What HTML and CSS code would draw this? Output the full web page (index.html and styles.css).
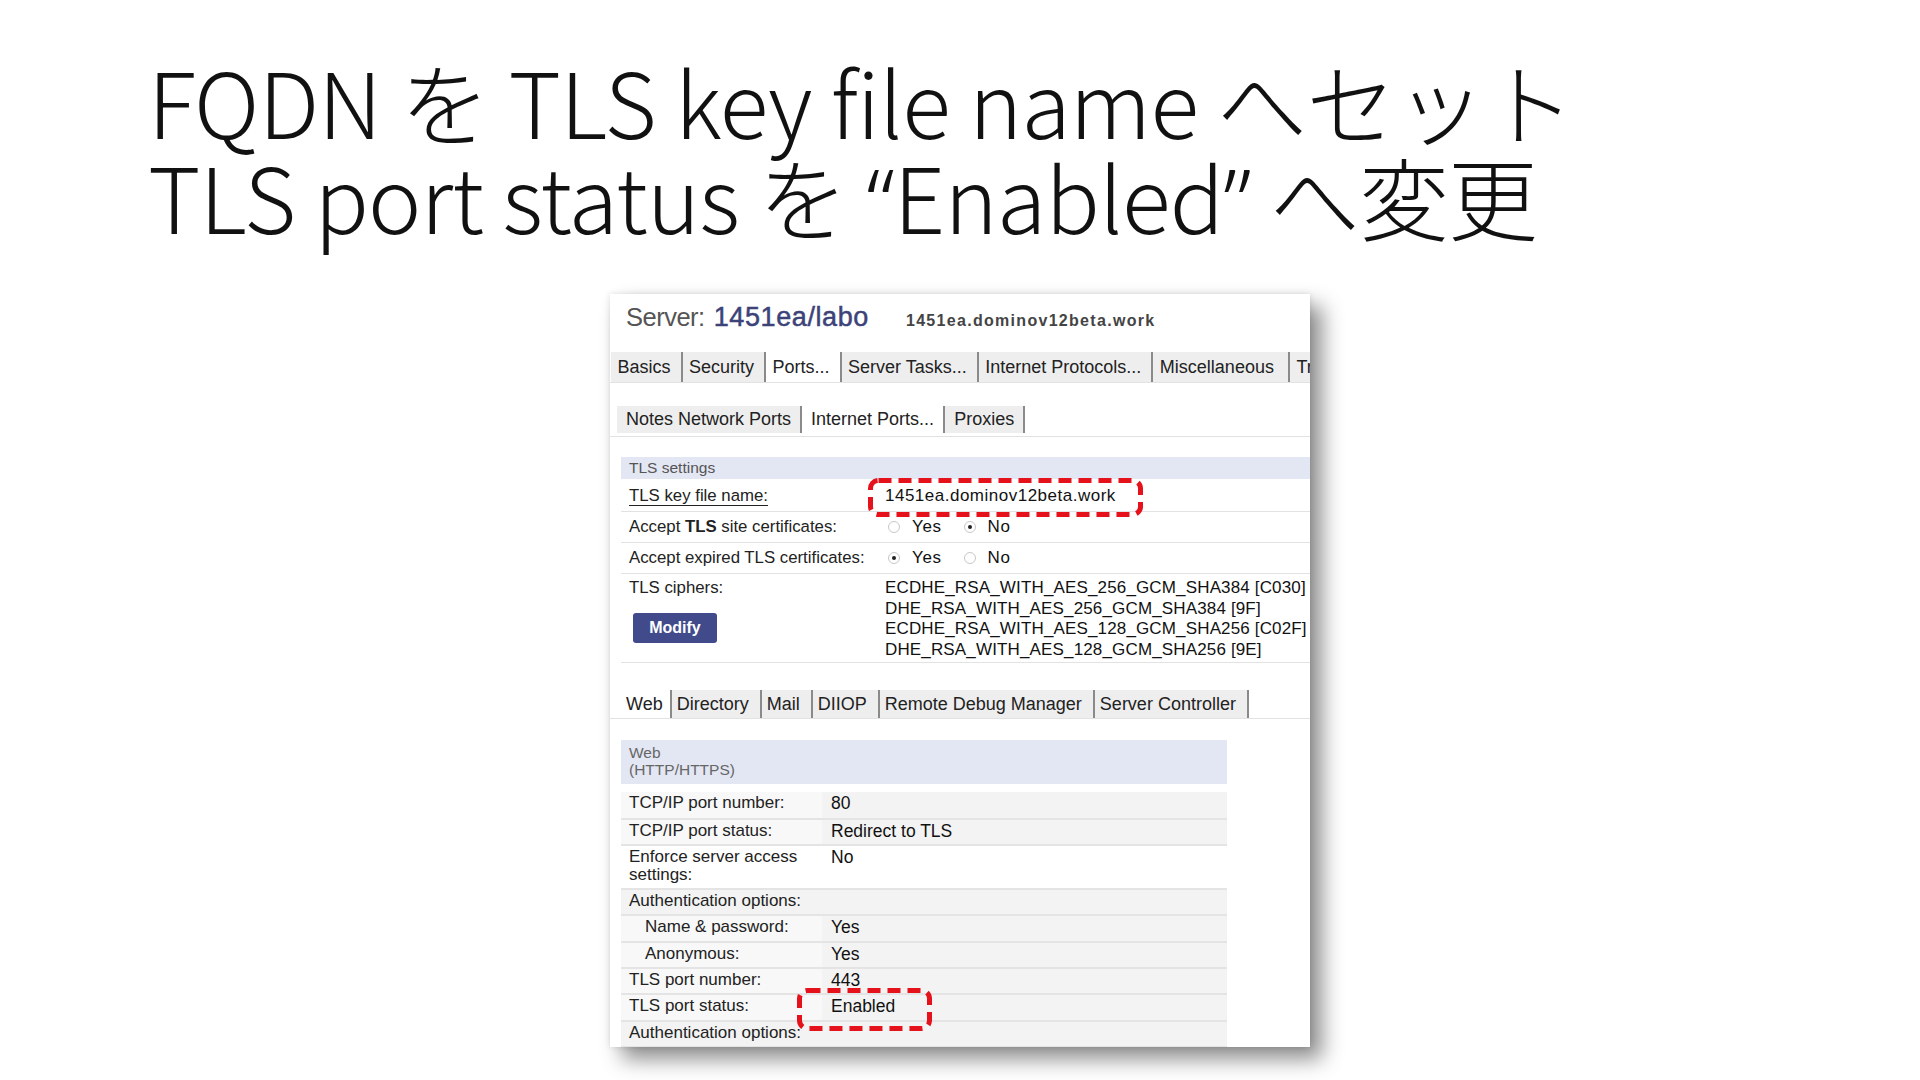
FILE: index.html
```html
<!DOCTYPE html>
<html lang="ja">
<head>
  <meta charset="UTF-8">
  <title>TLS settings</title>
  <link rel="stylesheet" href="styles.css">
</head>
<body>
  <div class="slide">
    <h1 class="title">FQDN を TLS key file name へセット<br>TLS port status を <span class="quote">“</span>Enabled<span class="quote">”</span> へ変更</h1>

    <div class="shot">
      <div class="server-head">
        <span class="server-label">Server:</span>
        <span class="server-name">1451ea/labo</span>
        <span class="server-host">1451ea.dominov12beta.work</span>
      </div>

      <div class="tabs tabs-main">
        <span class="tab">Basics</span>
        <span class="tab">Security</span>
        <span class="tab active">Ports...</span>
        <span class="tab">Server Tasks...</span>
        <span class="tab">Internet Protocols...</span>
        <span class="tab">Miscellaneous</span>
        <span class="tab">Transactional Logging</span>
      </div>

      <div class="tabs tabs-sub">
        <span class="tab">Notes Network Ports</span>
        <span class="tab active">Internet Ports...</span>
        <span class="tab">Proxies</span>
      </div>

      <div class="tls">
        <div class="sec-head">TLS settings</div>
        <div class="row row-key">
          <div class="lbl"><span class="link">TLS key file name:</span></div>
          <div class="val wide">1451ea.dominov12beta.work</div>
        </div>
        <div class="row row-radio">
          <div class="lbl">Accept <b>TLS</b> site certificates:</div>
          <div class="val radios">
            <span class="radio"></span><span class="opt">Yes</span>
            <span class="radio on"></span><span class="opt">No</span>
          </div>
        </div>
        <div class="row row-radio">
          <div class="lbl">Accept expired TLS certificates:</div>
          <div class="val radios">
            <span class="radio on"></span><span class="opt">Yes</span>
            <span class="radio"></span><span class="opt">No</span>
          </div>
        </div>
        <div class="row row-ciphers">
          <div class="lbl">
            TLS ciphers:
            <button class="modify">Modify</button>
          </div>
          <div class="val ciphers">
            <div>ECDHE_RSA_WITH_AES_256_GCM_SHA384 [C030]</div>
            <div>DHE_RSA_WITH_AES_256_GCM_SHA384 [9F]</div>
            <div>ECDHE_RSA_WITH_AES_128_GCM_SHA256 [C02F]</div>
            <div>DHE_RSA_WITH_AES_128_GCM_SHA256 [9E]</div>
          </div>
        </div>
      </div>

      <div class="tabs tabs-proto">
        <span class="tab active">Web</span>
        <span class="tab">Directory</span>
        <span class="tab">Mail</span>
        <span class="tab">DIIOP</span>
        <span class="tab">Remote Debug Manager</span>
        <span class="tab">Server Controller</span>
      </div>

      <div class="web">
        <div class="web-head">Web<br>(HTTP/HTTPS)</div>
        <div class="wrow first"><div class="wl">TCP/IP port number:</div><div class="wv">80</div></div>
        <div class="wrow"><div class="wl">TCP/IP port status:</div><div class="wv">Redirect to TLS</div></div>
        <div class="wrow tall"><div class="wl">Enforce server access settings:</div><div class="wv">No</div></div>
        <div class="wrow"><div class="wl span">Authentication options:</div></div>
        <div class="wrow"><div class="wl indent">Name &amp; password:</div><div class="wv">Yes</div></div>
        <div class="wrow"><div class="wl indent">Anonymous:</div><div class="wv">Yes</div></div>
        <div class="wrow"><div class="wl">TLS port number:</div><div class="wv">443</div></div>
        <div class="wrow"><div class="wl">TLS port status:</div><div class="wv">Enabled</div></div>
        <div class="wrow"><div class="wl span">Authentication options:</div></div>
      </div>

      <!-- red callouts drawn over the screenshot -->
      <svg class="mark mark-key" width="275" height="39" viewBox="0 0 275 39">
        <rect x="2.5" y="2.5" width="270" height="34" rx="8" ry="8"/>
      </svg>
      <svg class="mark mark-status" width="135" height="43" viewBox="0 0 135 43">
        <rect x="2.5" y="2.5" width="130" height="38" rx="8" ry="8"/>
      </svg>
    </div>
  </div>
</body>
</html>
```

FILE: styles.css
```css
body {
    margin: 0;
    background: #ffffff;
}

.slide {
    width: 1920px;
    height: 1080px;
    overflow: hidden;
    position: relative;
}

/* 見出し */
.title {
    margin: 53px 0 0 148px;
    height: 190px;
    font-family: "Noto Sans CJK JP", sans-serif;
    font-weight: 300;
    font-size: 90px;
    line-height: 95px;
    letter-spacing: -0.8px;
    color: #111111;
    white-space: nowrap;
}

.quote {
    font-family: "Noto Sans", "Open Sans", sans-serif;
    font-weight: 300;
    line-height: 0;
}

/* スクリーンショット部分 */
.shot {
    position: relative;
    margin: 51px 0 0 610px;
    width: 700px;
    height: 753px;
    overflow: hidden;
    background: #ffffff;
    box-shadow: 12px 12px 20px rgba(0, 0, 0, 0.45), 0 0 6px rgba(0, 0, 0, 0.12);
    font-family: "Liberation Sans", Arial, sans-serif;
    color: #222222;
}

.server-head {
    display: flex;
    align-items: baseline;
    height: 58px;
    padding: 8px 0 0 16px;
    box-sizing: border-box;
    line-height: 30px;
    white-space: nowrap;
}

.server-label {
    font-size: 25.5px;
    letter-spacing: -0.5px;
    color: #555555;
}

.server-name {
    margin-left: 9px;
    font-size: 27px;
    letter-spacing: 0.6px;
    -webkit-text-stroke: 0.5px #3d4279;
    color: #3d4279;
}

.server-host {
    margin-left: 37px;
    font-size: 16px;
    font-weight: bold;
    letter-spacing: 1.3px;
    color: #444444;
}

/* タブ */
.tabs {
    display: flex;
    white-space: nowrap;
    border-bottom: 1px solid #e2e2e2;
}

.tab {
    padding: 0 10px 0 6.5px;
    border-right: 2px solid #8a8a8a;
    background: #eeeeee;
    font-size: 18px;
    color: #222222;
}

.tab.active {
    background: #ffffff;
}

.tabs-main {
    height: 30px;
    line-height: 30px;
    padding-left: 1px;
}

.tabs-main .tab:nth-child(6) {
    padding-right: 14px;
}

.tabs-sub {
    margin-top: 23px;
    height: 27px;
    line-height: 27px;
    padding: 0 0 3px 7px;
}

.tabs-sub .tab {
    padding: 0 9px 0 9px;
}

.tabs-proto {
    margin-top: 27px;
    height: 28px;
    line-height: 28px;
    padding-left: 11px;
}

.tabs-proto .tab {
    padding: 0 11px 0 5px;
}

.tabs-proto .tab:first-child {
    padding-right: 7px;
}

/* TLS 設定 */
.tls {
    margin: 20px 0 0 11px;
}

.sec-head {
    height: 22px;
    line-height: 22px;
    padding-left: 8px;
    background: #e3e6f3;
    font-size: 15.5px;
    color: #555555;
}

.row {
    display: flex;
    border-bottom: 1px solid #e2e2e2;
    font-size: 16.8px;
}

.lbl {
    width: 264px;
    flex: none;
    padding-left: 8px;
    box-sizing: border-box;
}

.val {
    font-size: 17px;
    color: #111111;
}

.row-key {
    height: 33px;
    padding-top: 2px;
    box-sizing: border-box;
    align-items: center;
}

.link {
    border-bottom: 1px solid #222222;
}

.wide {
    letter-spacing: 0.5px;
}

.row-radio {
    height: 30px;
    align-items: center;
}

.radios {
    display: flex;
    align-items: center;
}

.radio {
    width: 10px;
    height: 10px;
    margin: 0 12px 0 3px;
    border: 1px solid #c8c8c8;
    border-radius: 50%;
    position: relative;
}

.radio.on::after {
    content: "";
    position: absolute;
    left: 3px;
    top: 3px;
    width: 4px;
    height: 4px;
    border-radius: 50%;
    background: #222222;
}

.opt {
    margin-right: 19px;
    letter-spacing: 0.6px;
}

.row-ciphers {
    height: 89px;
    padding-top: 4px;
    box-sizing: border-box;
}

.row-ciphers .lbl {
    display: flex;
    flex-direction: column;
    align-items: flex-start;
}

.modify {
    margin: 15px 0 0 4px;
    width: 84px;
    height: 30px;
    border: none;
    border-radius: 3px;
    background: #414b8c;
    color: #ffffff;
    font-family: "Liberation Sans", Arial, sans-serif;
    font-size: 16px;
    font-weight: bold;
}

.ciphers {
    line-height: 20.7px;
    letter-spacing: 0.15px;
    white-space: nowrap;
}

/* Web 表 */
.web {
    margin: 21px 0 0 11px;
    width: 606px;
}

.web-head {
    height: 44px;
    padding: 4px 0 0 8px;
    box-sizing: border-box;
    background: #e3e6f3;
    font-size: 15.5px;
    line-height: 17px;
    color: #666666;
}

.wrow {
    display: flex;
    height: 26.4px;
    border-bottom: 2px solid #e4e4e4;
    box-sizing: border-box;
    font-size: 17px;
    line-height: 22px;
}

.wrow.first {
    height: 36px;
    padding-top: 8px;
}

.wrow.tall {
    height: 43.5px;
    line-height: 18px;
    padding-top: 2px;
}

.wl {
    width: 201px;
    flex: none;
    padding-left: 8px;
    box-sizing: border-box;
    background: #f8f8f8;
}

.wl.indent {
    padding-left: 24px;
}

.wl.span {
    width: 100%;
    background: #f3f3f3;
}

.wv {
    flex: 1;
    padding-left: 9px;
    background: #f3f3f3;
    font-size: 17.5px;
    color: #111111;
}

.wrow.tall .wl,
.wrow.tall .wv {
    background: #ffffff;
}

/* 赤い点線の囲み */
.mark {
    position: absolute;
    overflow: visible;
}

.mark rect {
    fill: none;
    stroke: #e5121b;
    stroke-width: 5;
    stroke-dasharray: 13 7;
}

.mark-key {
    left: 258px;
    top: 184px;
}

.mark-status {
    left: 187px;
    top: 694px;
}
```
